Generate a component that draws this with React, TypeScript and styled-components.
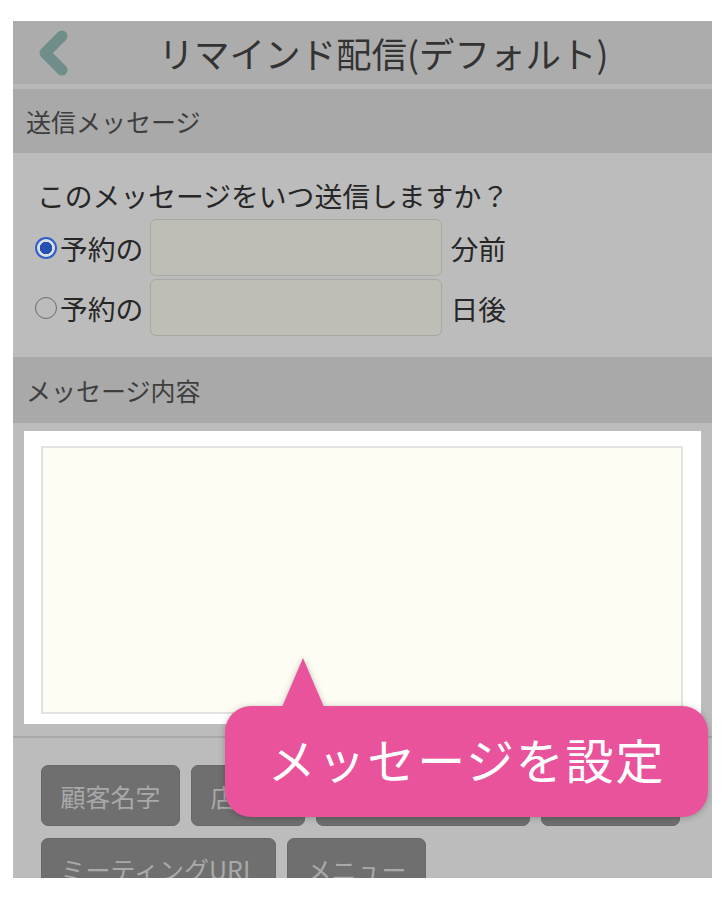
import React from 'react';
import styled, { createGlobalStyle } from 'styled-components';

const GlobalStyle = createGlobalStyle`
  body {
    margin: 0;
    background: #ffffff;
    font-family: "Noto Sans CJK JP", "Noto Sans", sans-serif;
  }
`;

const Screen = styled.div`
  position: relative;
  margin: 21px 16px 0 13px;
  height: 857px;
  overflow: hidden;
  background: #bcbcbc;
`;

const Header = styled.header`
  display: grid;
  grid-template-columns: 70px 1fr 28px;
  align-items: center;
  height: 63px;
  background: #acacac;
  border-bottom: 5px solid #b9b9b9;
`;

const BackButton = styled.button`
  display: flex;
  align-items: center;
  padding: 0 0 0 26px;
  border: none;
  background: none;
  cursor: pointer;
`;

const Title = styled.h1`
  margin: 0;
  text-align: center;
  font-size: 35.5px;
  font-weight: 400;
  color: #333333;
`;

const SectionHeader = styled.div<{ $height: number }>`
  display: flex;
  align-items: center;
  height: ${p => p.$height}px;
  padding-left: 13px;
  background: #a9a9a9;
  font-size: 25px;
  color: #3e3e3e;
`;

const TimingBody = styled.div`
  display: flex;
  flex-direction: column;
  gap: 3px;
  padding: 22px 0 21px 22px;
`;

const Question = styled.div`
  height: 40px;
  margin-bottom: 1px;
  line-height: 40px;
  font-size: 27.8px;
  color: #272727;
  padding-left: 2px;
`;

const Row = styled.label`
  display: flex;
  align-items: center;
  height: 57px;
  font-size: 27.8px;
  color: #272727;
`;

const Radio = styled.span<{ $checked?: boolean }>`
  box-sizing: border-box;
  flex: none;
  width: 22px;
  height: 22px;
  margin-right: 3px;
  border-radius: 50%;
  border: ${p => (p.$checked ? '2px solid #2f5fc2' : '1.5px solid #6c6c6c')};
  background: ${p => (p.$checked ? 'radial-gradient(circle, #2451b0 0 6px, #d9dde6 6.5px)' : 'transparent')};
`;

const NumberBox = styled.input`
  box-sizing: border-box;
  width: 292px;
  height: 57px;
  margin: 0 8px 0 7px;
  border: 1.5px solid #a8a8a4;
  border-radius: 6px;
  background: #bebdb6;
  font: inherit;
  outline: none;
`;

const ContentArea = styled.div`
  padding: 8px 11px 12px 11px;
  border-bottom: 2px solid #a9a9a9;
`;

const WhiteFrame = styled.div`
  height: 293px;
  box-sizing: border-box;
  padding: 15px 18px 10px 17px;
  background: #ffffff;
`;

const MessageBox = styled.textarea`
  display: block;
  box-sizing: border-box;
  width: 100%;
  height: 100%;
  border: 2px solid #e2e2de;
  background: #fdfdf4;
  resize: none;
  outline: none;
  font: inherit;
`;

const TagArea = styled.div`
  display: flex;
  flex-wrap: wrap;
  gap: 12px 11px;
  padding: 27px 20px 0 28px;
`;

const TagButton = styled.button`
  box-sizing: border-box;
  height: 61px;
  padding: 0 18.5px;
  border: 1px solid #686868;
  border-radius: 7px;
  background: #6f6f6f;
  font-family: inherit;
  font-size: 25px;
  color: #a9a9a9;
  white-space: nowrap;
`;

const Callout = styled.div`
  position: absolute;
  left: 212px;
  top: 685px;
  box-sizing: border-box;
  display: flex;
  align-items: center;
  justify-content: center;
  width: 483px;
  height: 111px;
  padding-bottom: 8px;
  border-radius: 26px;
  background: #e9539c;
  filter: drop-shadow(0 1px 3px rgba(0, 0, 0, 0.25));
  font-size: 48px;
  color: #ffffff;
  letter-spacing: 1.8px;

  &::before {
    content: '';
    position: absolute;
    left: 57px;
    top: -48px;
    border-left: 21px solid transparent;
    border-right: 21px solid transparent;
    border-bottom: 49px solid #e9539c;
  }
`;

const tags = ['顧客名字', '店舗名', '担当スタッフ名', '予約日時', 'ミーティングURL', 'メニュー'];

const App: React.FC = () => {
  return (
    <>
      <GlobalStyle />
      <Screen>
        <Header>
          <BackButton aria-label="戻る">
            <svg width="30" height="46" viewBox="0 0 30 46">
              <path
                d="M23 6 L6 23 L23 40"
                fill="none"
                stroke="#6f8e89"
                strokeWidth="11"
                strokeLinecap="round"
                strokeLinejoin="round"
              />
            </svg>
          </BackButton>
          <Title>リマインド配信(デフォルト)</Title>
          <span />
        </Header>

        <SectionHeader $height={64}>送信メッセージ</SectionHeader>
        <TimingBody>
          <Question>このメッセージをいつ送信しますか？</Question>
          <Row>
            <Radio $checked />
            予約の
            <NumberBox type="text" />
            分前
          </Row>
          <Row>
            <Radio />
            予約の
            <NumberBox type="text" />
            日後
          </Row>
        </TimingBody>

        <SectionHeader $height={66}>メッセージ内容</SectionHeader>
        <ContentArea>
          <WhiteFrame>
            <MessageBox />
          </WhiteFrame>
        </ContentArea>

        <TagArea>
          {tags.map(tag => (
            <TagButton key={tag}>{tag}</TagButton>
          ))}
        </TagArea>

        <Callout>メッセージを設定</Callout>
      </Screen>
    </>
  );
};

export default App;
